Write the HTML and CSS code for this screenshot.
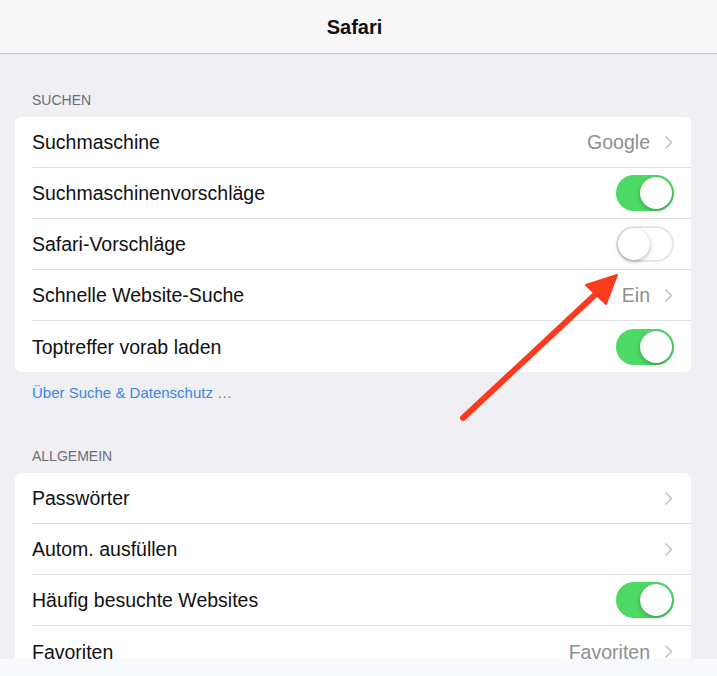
FILE: index.html
```html
<!DOCTYPE html>
<html lang="de">
<head>
<meta charset="utf-8">
<title>Safari</title>
<link rel="stylesheet" href="styles.css">
</head>
<body>
<div class="screen">
  <header class="navbar"><h1 class="title">Safari</h1></header>
  <main class="content">
    <div class="section-head first">SUCHEN</div>
    <div class="card">
      <div class="row"><span class="label">Suchmaschine</span><span class="value">Google</span><svg class="chev" viewBox="0 0 9 15"><polyline points="1.5,1.5 7.5,7.5 1.5,13.5"/></svg></div>
      <div class="row"><span class="label">Suchmaschinenvorschläge</span><span class="toggle on"><span class="knob"></span></span></div>
      <div class="row"><span class="label">Safari-Vorschläge</span><span class="toggle off"><span class="knob"></span></span></div>
      <div class="row"><span class="label">Schnelle Website-Suche</span><span class="value">Ein</span><svg class="chev" viewBox="0 0 9 15"><polyline points="1.5,1.5 7.5,7.5 1.5,13.5"/></svg></div>
      <div class="row"><span class="label">Toptreffer vorab laden</span><span class="toggle on"><span class="knob"></span></span></div>
    </div>
    <div class="section-foot"><a class="link">Über Suche &amp; Datenschutz …</a></div>
    <div class="section-head">ALLGEMEIN</div>
    <div class="card">
      <div class="row"><span class="label">Passwörter</span><svg class="chev" viewBox="0 0 9 15"><polyline points="1.5,1.5 7.5,7.5 1.5,13.5"/></svg></div>
      <div class="row"><span class="label">Autom. ausfüllen</span><svg class="chev" viewBox="0 0 9 15"><polyline points="1.5,1.5 7.5,7.5 1.5,13.5"/></svg></div>
      <div class="row"><span class="label">Häufig besuchte Websites</span><span class="toggle on"><span class="knob"></span></span></div>
      <div class="row"><span class="label">Favoriten</span><span class="value">Favoriten</span><svg class="chev" viewBox="0 0 9 15"><polyline points="1.5,1.5 7.5,7.5 1.5,13.5"/></svg></div>
    </div>
  </main>
  <div class="bottombar"></div>
  <svg class="arrow" viewBox="0 0 717 676" width="717" height="676">
    <line x1="463" y1="418" x2="598" y2="292" />
    <polygon points="617,275 586,285 606,304" />
  </svg>
</div>
</body>
</html>
```
FILE: styles.css
```css
html, body {
  margin: 0;
  padding: 0;
}
body {
  font-family: "Liberation Sans", Arial, sans-serif;
  background: #efeff4;
  color: #000;
}
.screen {
  position: relative;
  width: 717px;
  height: 676px;
  display: flex;
  flex-direction: column;
  overflow: hidden;
}
.navbar {
  height: 53px;
  flex: none;
  background: #f7f7f8;
  border-bottom: 1px solid #c8c8cc;
  display: flex;
  align-items: center;
  justify-content: center;
  padding-right: 8px;
}
.title {
  margin: 0;
  font-size: 20px;
  font-weight: 700;
  color: #111;
  padding-top: 2px;
}
.content {
  flex: 1;
  overflow: hidden;
  padding: 0 26px 0 15px;
  background: #efeff4;
}
.section-head {
  font-size: 14px;
  line-height: 16px;
  color: #6d6d72;
  padding: 47px 0 9px 17px;
}
.section-head.first {
  padding-top: 38px;
}
.card {
  background: #fff;
  border-radius: 6px;
  overflow: hidden;
}
.row {
  height: 51px;
  display: flex;
  align-items: center;
  margin-left: 17px;
  padding-right: 17px;
  box-sizing: border-box;
  border-bottom: 1px solid #e0e0e4;
}
.row:last-child {
  border-bottom: none;
}
.label {
  flex: 1;
  font-size: 19.5px;
  color: #111;
  padding-top: 1px;
}
.value {
  font-size: 19.5px;
  color: #8e8e93;
  margin-right: 14px;
  padding-top: 1px;
}
.chev {
  width: 9px;
  height: 15px;
  fill: none;
  stroke: #c4c4c9;
  stroke-width: 1.6;
  margin-right: 1px;
}
.toggle {
  width: 58px;
  height: 36px;
  border-radius: 18px;
  box-sizing: border-box;
  position: relative;
  flex: none;
}
.toggle.on {
  background: #4cd964;
}
.toggle.off {
  background: #fff;
  border: 2px solid #e6e6ea;
}
.knob {
  position: absolute;
  width: 32px;
  height: 32px;
  border-radius: 50%;
  background: #fff;
  box-shadow: 0 2px 4px rgba(0,0,0,0.25), 0 0 1px rgba(0,0,0,0.2);
  top: 2px;
}
.toggle.on .knob {
  right: 2px;
}
.toggle.off .knob {
  left: 0;
  top: 0;
}
.section-foot {
  padding: 12px 0 0 17px;
  font-size: 15px;
  line-height: 17px;
}
.link {
  color: #3b86e8;
}
.bottombar {
  height: 17px;
  flex: none;
  background: #f8f9fd;
}
.arrow {
  position: absolute;
  left: 0;
  top: 0;
  pointer-events: none;
}
.arrow line {
  stroke: #fb3b1e;
  stroke-width: 6;
  stroke-linecap: round;
}
.arrow polygon {
  fill: #fb3b1e;
  stroke: #fb3b1e;
  stroke-width: 2;
  stroke-linejoin: round;
}
```
